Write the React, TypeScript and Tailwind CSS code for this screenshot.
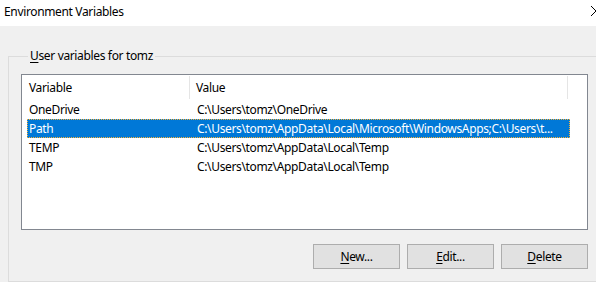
const rows = [
  { name: "OneDrive", value: "C:\\Users\\tomz\\OneDrive" },
  {
    name: "Path",
    value: "C:\\Users\\tomz\\AppData\\Local\\Microsoft\\WindowsApps;C:\\Users\\t...",
  },
  { name: "TEMP", value: "C:\\Users\\tomz\\AppData\\Local\\Temp" },
  { name: "TMP", value: "C:\\Users\\tomz\\AppData\\Local\\Temp" },
];

const selected = 1;

const DialogButton = ({ hot, rest }: { hot: string; rest: string }) => (
  <button
    type="button"
    className="w-[87px] h-[25px] bg-[#e1e1e1] border border-[#adadad] text-black text-[12px] leading-none tracking-[-0.35px]"
  >
    <span className="underline underline-offset-[2px]">{hot}</span>
    {rest}
  </button>
);

const App = () => {
  return (
    <div
      className="w-[596px] h-[282px] overflow-hidden bg-[#f0f0f0] text-black text-[12px] tracking-[-0.35px]"
      style={{ fontFamily: '"Noto Sans", "Open Sans", sans-serif' }}
    >
      {/* Title bar */}
      <div className="h-[26px] bg-white flex items-center justify-between pl-[4px]">
        <span className="leading-none -mt-[3px]">Environment Variables</span>
        <svg width="12" height="12" viewBox="0 0 12 12" className="-mr-[6px] -mt-[4px]" aria-hidden="true">
          <path d="M1 1 L11 11 M11 1 L1 11" stroke="#000" strokeWidth="1" fill="none" />
        </svg>
      </div>

      {/* User variables group */}
      <fieldset className="mt-[22px] ml-[8px] w-[620px] h-[234px] border border-[#dcdcdc] pl-[12px]">
        <legend className="ml-[7px] px-[2px] leading-[16px]">
          <span className="underline underline-offset-[2px]">U</span>ser variables for tomz
        </legend>

        <div className="mt-[10px] w-[567px] h-[156px] bg-white border border-[#828790]">
          {/* Header */}
          <div className="h-[25px] flex items-center">
            <div className="w-[168px] h-full flex items-center justify-between">
              <span className="pl-[7px]">Variable</span>
              <div className="w-px h-[23px] bg-[#e5e5e5]" />
            </div>
            <div className="w-[378px] h-full flex items-center justify-between">
              <span className="pl-[6px]">Value</span>
              <div className="w-px h-[23px] bg-[#e5e5e5]" />
            </div>
          </div>

          {/* Rows */}
          <div className="flex flex-col">
            {rows.map((r, i) => (
              <div
                key={r.name}
                className={
                  i === selected
                    ? "ml-[5px] w-[543px] h-[19px] flex items-center bg-[#0078d7] text-white outline outline-1 outline-dotted outline-[#f7b23b] -outline-offset-1"
                    : "ml-[5px] w-[543px] h-[19px] flex items-center"
                }
              >
                <span className="w-[168px] pl-[2px] whitespace-nowrap">{r.name}</span>
                <span className="flex-1 pl-[2px] whitespace-nowrap">{r.value}</span>
              </div>
            ))}
          </div>
        </div>

        {/* Buttons */}
        <div className="w-[567px] mt-[14px] flex justify-end gap-[7px]">
          <DialogButton hot="N" rest="ew..." />
          <DialogButton hot="E" rest="dit..." />
          <DialogButton hot="D" rest="elete" />
        </div>
      </fieldset>
    </div>
  );
};

export default App;
